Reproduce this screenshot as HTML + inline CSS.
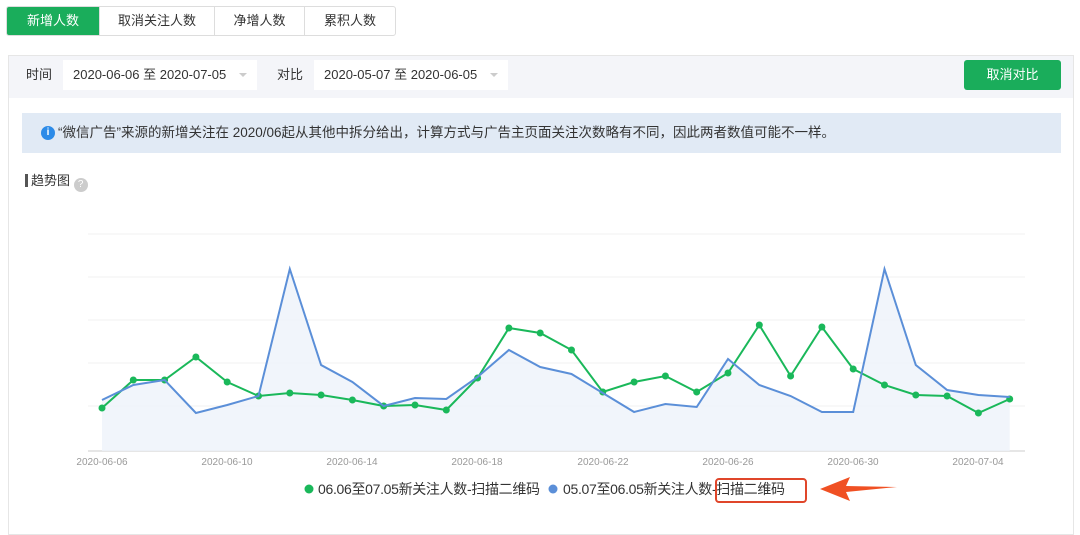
<!DOCTYPE html>
<html><head><meta charset="utf-8"><style>
*{margin:0;padding:0;box-sizing:border-box}
body{width:1080px;height:530px;background:#fff;font-family:"Liberation Sans","Noto Sans CJK SC",sans-serif;font-size:13px;color:#333;position:relative;overflow:hidden}
.tabs{position:absolute;left:6px;top:6px;display:flex;height:30px;border:1px solid #ddd;border-radius:3px;overflow:hidden}
.tabs div{height:28px;line-height:28px;text-align:center;border-left:1px solid #ddd;font-size:13px}
.tabs div:first-child{border-left:none;background:#1aad5b;color:#fff}
.panel{position:absolute;left:8px;top:55px;width:1066px;height:480px;border:1px solid #e6e6e6}
.bar{position:absolute;left:0;top:0;width:100%;height:42px;background:#f4f5f9}
.sel{position:absolute;top:4px;height:30px;background:#fff;line-height:30px;padding-left:10px;font-size:13px}
.sel:after{content:"";position:absolute;right:10px;top:13px;border:4px solid transparent;border-top-color:#ccc}
.lbl{position:absolute;top:4px;line-height:30px}
.btn{position:absolute;left:955px;top:4px;width:97px;height:30px;background:#1aad5b;color:#fff;border-radius:3px;text-align:center;line-height:30px}
.info{position:absolute;left:13px;top:57px;width:1039px;height:40px;background:#e1eaf5;line-height:40px;padding-left:36px;font-size:13.5px;color:#333;white-space:nowrap}
.info i{position:absolute;left:19px;top:13px;width:14px;height:14px;border-radius:50%;background:#2c8be8;color:#fff;font-style:normal;font-size:10px;line-height:14px;text-align:center;font-weight:bold}
</style></head><body>
<div class="tabs"><div style="width:92px">新增人数</div><div style="width:115px">取消关注人数</div><div style="width:90px">净增人数</div><div style="width:91px">累积人数</div></div>
<div class="panel">
<div class="bar">
<span class="lbl" style="left:17px">时间</span>
<div class="sel" style="left:54px;width:194px">2020-06-06 至 2020-07-05</div>
<span class="lbl" style="left:268px">对比</span>
<div class="sel" style="left:305px;width:194px">2020-05-07 至 2020-06-05</div>
<div class="btn">取消对比</div>
</div>
<div class="info"><i>i</i>“微信广告”来源的新增关注在 2020/06起从其他中拆分给出，计算方式与广告主页面关注次数略有不同，因此两者数值可能不一样。</div>
<div style="position:absolute;left:16px;top:115px;font-size:13px;line-height:20px"><span style="display:inline-block;width:3px;height:13px;background:#555;vertical-align:-2px;margin-right:3px"></span>趋势图 <span style="display:inline-block;width:14px;height:14px;border-radius:50%;background:#ccc;color:#fff;font-size:10px;line-height:14px;text-align:center;vertical-align:-2px">?</span></div>
</div>
<svg width="1080" height="530" style="position:absolute;left:0;top:0" font-family="Liberation Sans, sans-serif">
<g stroke="#f0f0f0"><line x1="88" x2="1025" y1="234" y2="234"/><line x1="88" x2="1025" y1="277" y2="277"/><line x1="88" x2="1025" y1="320" y2="320"/><line x1="88" x2="1025" y1="363" y2="363"/><line x1="88" x2="1025" y1="406" y2="406"/></g>
<line x1="88" x2="1025" y1="451" y2="451" stroke="#ccc"/>
<polygon fill="#edf2fa" opacity=".8" points="102,451 102,400 133.3,385 164.6,380 195.9,413 227.2,405 258.5,396 289.8,269 321.1,365 352.4,382 383.7,406 415,398 446.3,399 477.6,377 508.9,350 540.2,367 571.5,374 602.8,393 634.1,412 665.4,404 696.7,407 728,359 759.3,385 790.6,396 821.9,412 853.2,412 884.5,269 915.8,365 947.1,390 978.4,395 1009.7,397 1009.7,451"/>
<polyline fill="none" stroke="#1ab85a" stroke-width="2" points="102,408 133.3,380 164.6,380 195.9,357 227.2,382 258.5,396 289.8,393 321.1,395 352.4,400 383.7,406 415,405 446.3,410 477.6,378 508.9,328 540.2,333 571.5,350 602.8,392 634.1,382 665.4,376 696.7,392 728,373 759.3,325 790.6,376 821.9,327 853.2,369 884.5,385 915.8,395 947.1,396 978.4,413 1009.7,399"/>
<g fill="#1ab85a"><circle cx="102" cy="408" r="3.5"/><circle cx="133.3" cy="380" r="3.5"/><circle cx="164.6" cy="380" r="3.5"/><circle cx="195.9" cy="357" r="3.5"/><circle cx="227.2" cy="382" r="3.5"/><circle cx="258.5" cy="396" r="3.5"/><circle cx="289.8" cy="393" r="3.5"/><circle cx="321.1" cy="395" r="3.5"/><circle cx="352.4" cy="400" r="3.5"/><circle cx="383.7" cy="406" r="3.5"/><circle cx="415" cy="405" r="3.5"/><circle cx="446.3" cy="410" r="3.5"/><circle cx="477.6" cy="378" r="3.5"/><circle cx="508.9" cy="328" r="3.5"/><circle cx="540.2" cy="333" r="3.5"/><circle cx="571.5" cy="350" r="3.5"/><circle cx="602.8" cy="392" r="3.5"/><circle cx="634.1" cy="382" r="3.5"/><circle cx="665.4" cy="376" r="3.5"/><circle cx="696.7" cy="392" r="3.5"/><circle cx="728" cy="373" r="3.5"/><circle cx="759.3" cy="325" r="3.5"/><circle cx="790.6" cy="376" r="3.5"/><circle cx="821.9" cy="327" r="3.5"/><circle cx="853.2" cy="369" r="3.5"/><circle cx="884.5" cy="385" r="3.5"/><circle cx="915.8" cy="395" r="3.5"/><circle cx="947.1" cy="396" r="3.5"/><circle cx="978.4" cy="413" r="3.5"/><circle cx="1009.7" cy="399" r="3.5"/></g>
<polyline fill="none" stroke="#5b8fd8" stroke-width="2" points="102,400 133.3,385 164.6,380 195.9,413 227.2,405 258.5,396 289.8,269 321.1,365 352.4,382 383.7,406 415,398 446.3,399 477.6,377 508.9,350 540.2,367 571.5,374 602.8,393 634.1,412 665.4,404 696.7,407 728,359 759.3,385 790.6,396 821.9,412 853.2,412 884.5,269 915.8,365 947.1,390 978.4,395 1009.7,397"/>
<g font-size="10" fill="#999" text-anchor="middle"><text x="102" y="465">2020-06-06</text><text x="227" y="465">2020-06-10</text><text x="352" y="465">2020-06-14</text><text x="477" y="465">2020-06-18</text><text x="603" y="465">2020-06-22</text><text x="728" y="465">2020-06-26</text><text x="853" y="465">2020-06-30</text><text x="978" y="465">2020-07-04</text></g>
<circle cx="309" cy="489" r="4.5" fill="#1ab85a"/><circle cx="553" cy="489" r="4.5" fill="#5b8fd8"/>
<g font-size="14" fill="#333" font-family="Liberation Sans, Noto Sans CJK SC, sans-serif"><text x="318" y="494" textLength="222">06.06至07.05新关注人数-扫描二维码</text><text x="563" y="494" textLength="222">05.07至06.05新关注人数-扫描二维码</text></g>
<rect x="716" y="479" width="90" height="23" rx="3" fill="none" stroke="#e0462a" stroke-width="2"/>
<polygon points="820,489 850,477 846,486 897,487 846,492 850,501" fill="#f05023"/>
</svg>
</body></html>
